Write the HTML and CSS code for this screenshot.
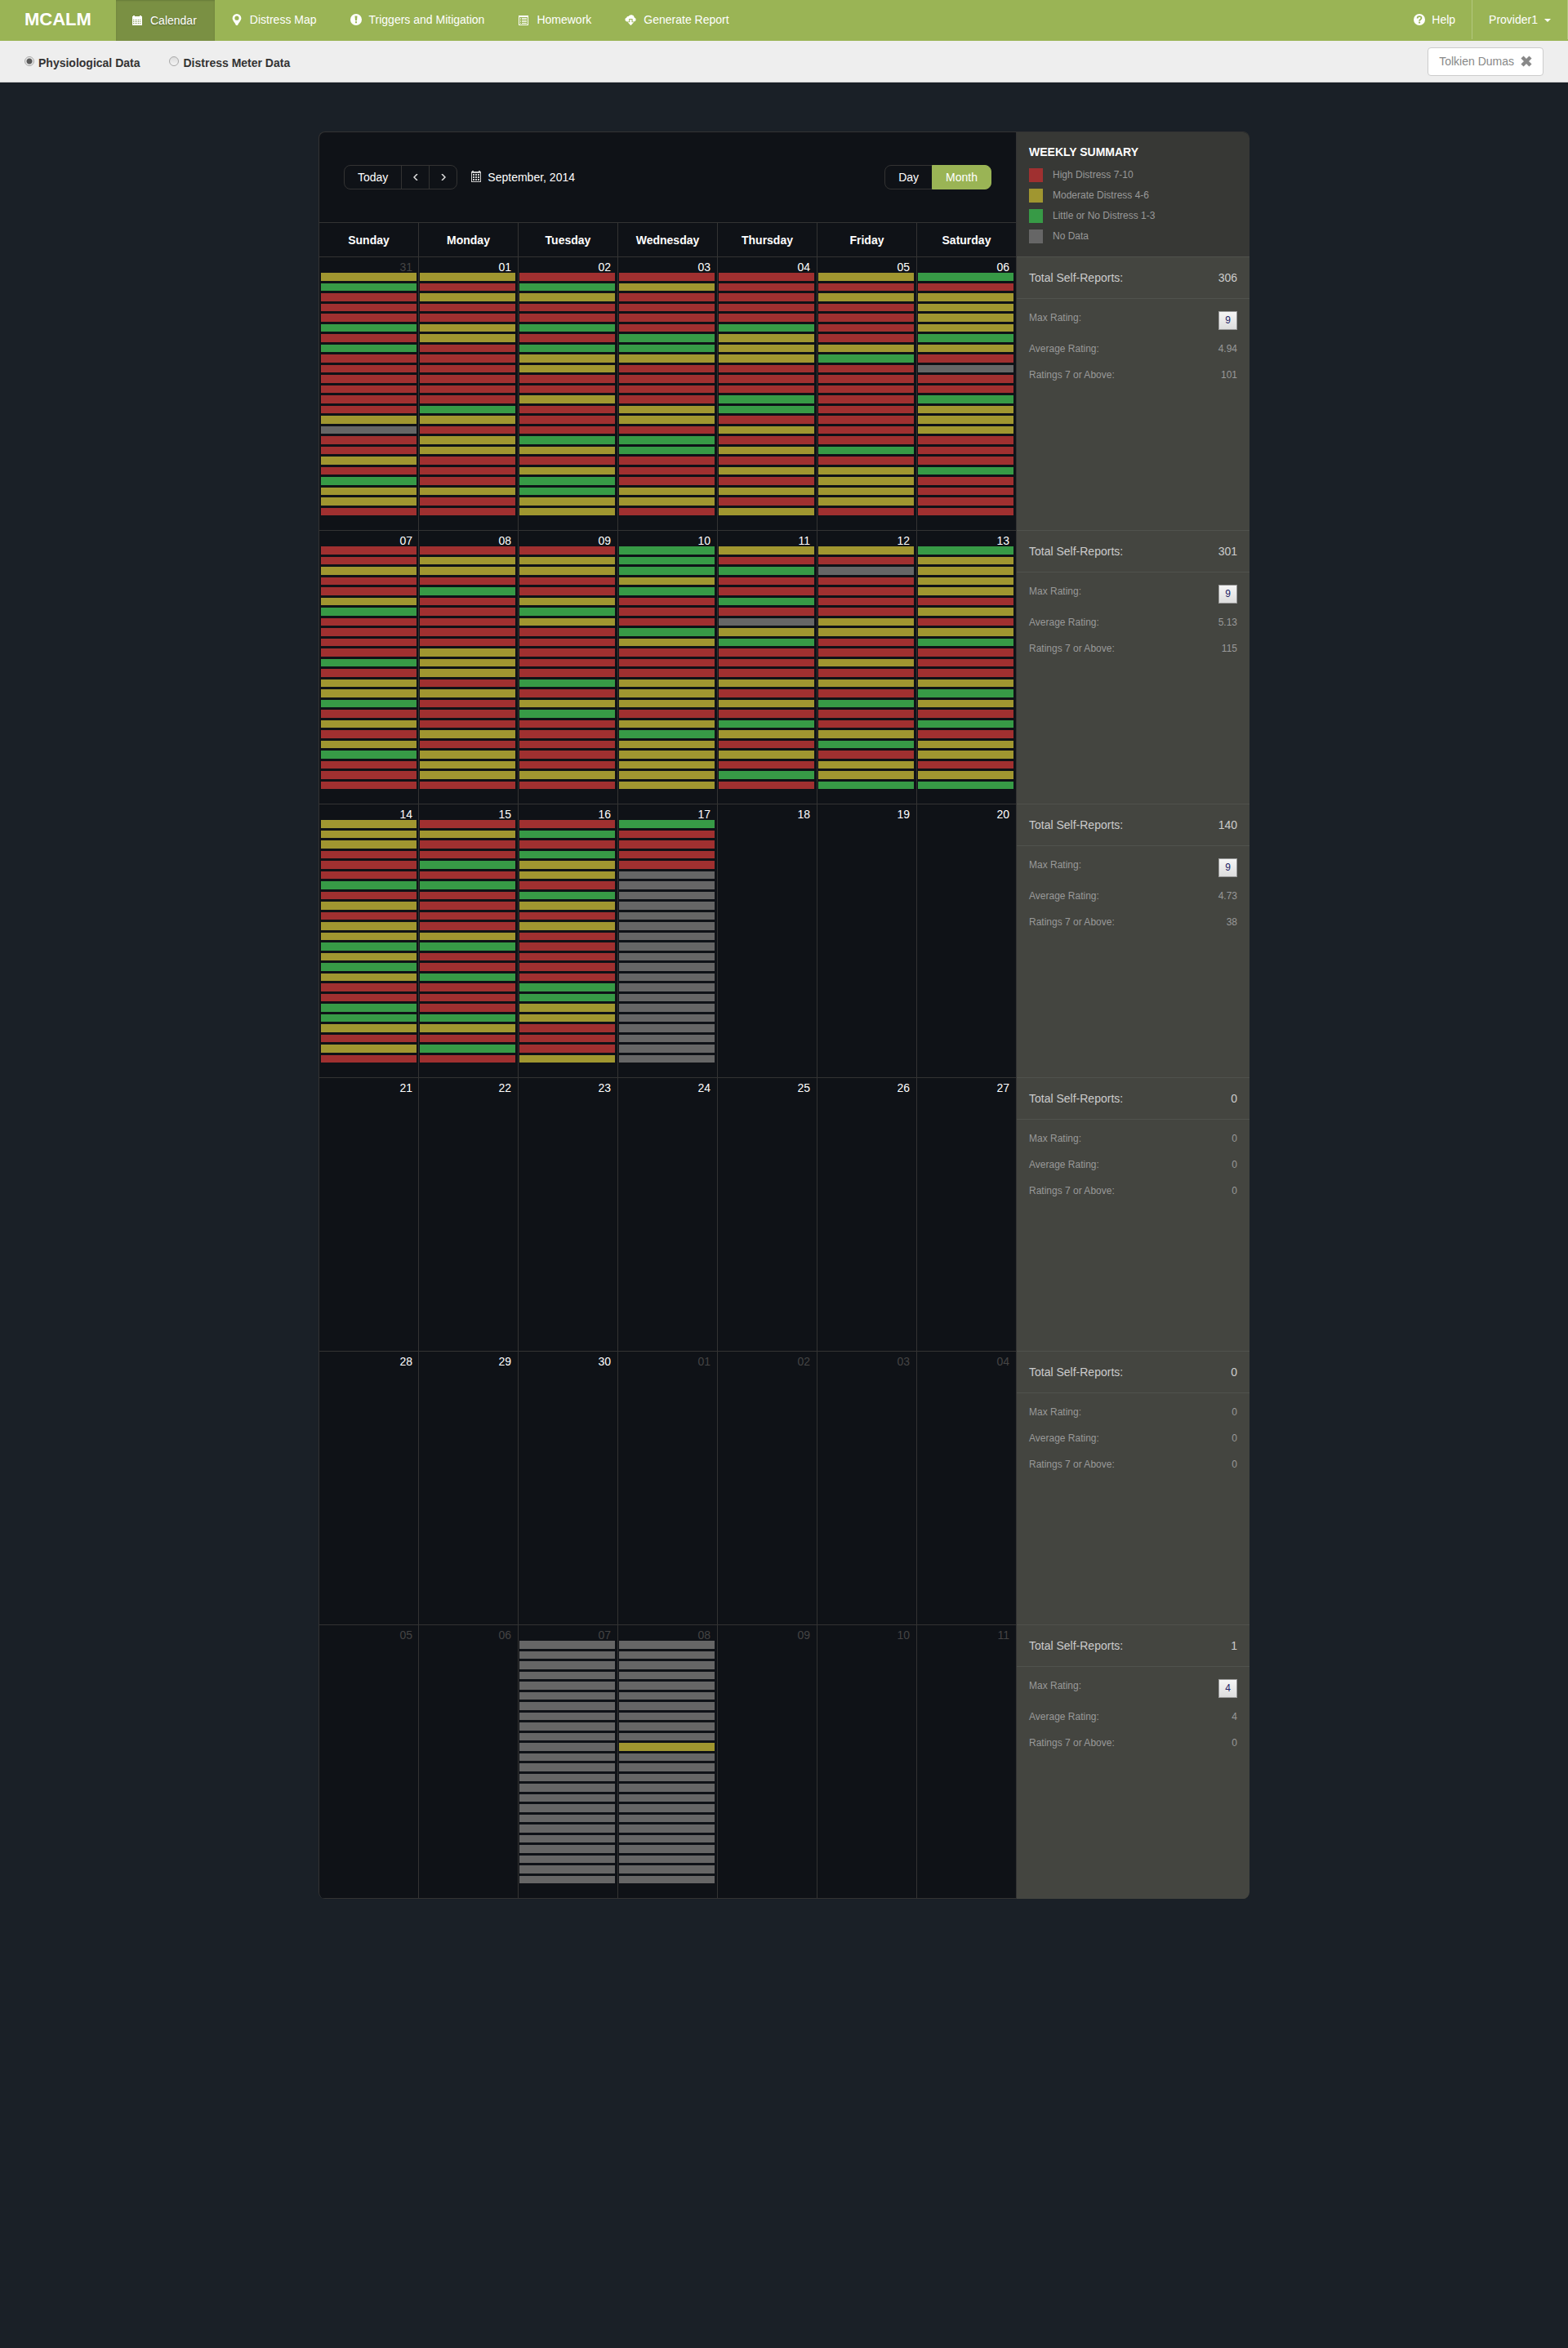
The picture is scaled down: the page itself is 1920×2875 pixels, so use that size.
FILE: index.html
```html
<!DOCTYPE html>
<html lang="en">
<head>
<meta charset="utf-8">
<meta name="viewport" content="width=device-width, initial-scale=1">
<title>MCALM - Calendar</title>
<link rel="stylesheet" href="styles.css">
<script src="calendar.js" defer></script>
</head>
<body>
<header class="navbar">
  <a class="brand" href="#">MCALM</a>
  <nav class="nav">
    <a class="nav-link active" href="#">
      <svg class="icon" viewBox="0 0 14 14" aria-hidden="true"><path fill="currentColor" fill-rule="evenodd" d="M0 2h1V1h2v1h6V1h2v1h1v3H0zM0 5h12v8H0zM1 6v1h1V6zm2 0v1h1V6zm2 0v1h1V6zm2 0v1h1V6zm2 0v1h1V6zM1 8v1h1V8zm2 0v1h1V8zm2 0v1h1V8zm2 0v1h1V8zm2 0v1h1V8zM1 10v1h1v-1zm2 0v1h1v-1zm2 0v1h1v-1zm2 0v1h1v-1zm2 0v1h1v-1z"/></svg>
      <span>Calendar</span></a>
    <a class="nav-link" href="#">
      <svg class="icon" viewBox="0 0 14 14" aria-hidden="true"><path fill="currentColor" fill-rule="evenodd" d="M7 0a5.4 5.4 0 0 1 5.4 5.2C12.400 8.200 9 11 8 14H6C5 11 1.600 8.200 1.600 5.200A5.400 5.400 0 0 1 7 0zm0 2.600a2.600 2.600 0 1 0 0 5.200 2.600 2.600 0 0 0 0-5.200z"/></svg>
      <span>Distress Map</span></a>
    <a class="nav-link" href="#">
      <svg class="icon" viewBox="0 0 14 14" aria-hidden="true"><path fill="currentColor" fill-rule="evenodd" d="M7 0a7 7 0 1 1 0 14A7 7 0 0 1 7 0zM5.500 2.500 6 8.200h2l.5-5.700zM6 9.300v2h2v-2z"/></svg>
      <span>Triggers and Mitigation</span></a>
    <a class="nav-link" href="#">
      <svg class="icon" viewBox="0 0 14 14" aria-hidden="true"><path fill="currentColor" fill-rule="evenodd" d="M1 2h12v12H1zm1 2v9h10V4z"/><path fill="currentColor" d="M3 5h1v1H3zm2 0h6v1H5zM3 7h1v1H3zm2 0h6v1H5zM3 9h1v1H3zm2 0h6v1H5zm-2 2h1v1H3zm2 0h6v1H5z"/></svg>
      <span>Homework</span></a>
    <a class="nav-link" href="#">
      <svg class="icon" viewBox="0 0 14 14" aria-hidden="true"><path fill="currentColor" d="M2.700 9.500a2.600 2.600 0 0 1-.4-5.100A2 2 0 0 1 4.500 3a4 4 0 0 1 7.300 1.600A2.500 2.500 0 0 1 11.500 9.500H9.600V6H5.200v3.500z"/><path fill="currentColor" d="M6.300 7h2.200v3.300h2.600L7.400 14.200 3.700 10.300h2.600z"/></svg>
      <span>Generate Report</span></a>
  </nav>
  <div class="nav-user">
    <a class="help" href="#">
      <svg class="icon" viewBox="0 0 14 14" aria-hidden="true"><circle cx="7" cy="7" r="7" fill="currentColor"/><path d="M4.600 5.400C4.600 2.400 9.500 2.400 9.500 5.100 9.500 6.800 7.100 6.800 7.100 8.700" fill="none" stroke="#9ab455" stroke-width="1.800"/><path fill="#9ab455" d="M6.100 9.600h2v1.900h-2z"/></svg>
      <span>Help</span></a>
    <button class="account" type="button">Provider1<span class="caret"></span></button>
  </div>
</header>

<form class="subbar">
  <label class="choice"><input class="radio" type="radio" name="source" checked>Physiological Data</label>
  <label class="choice"><input class="radio" type="radio" name="source">Distress Meter Data</label>
  <button class="patient" type="button">Tolkien Dumas
    <svg class="icon" viewBox="0 0 14 14" aria-hidden="true"><path d="M2 2l10 10M12 2 2 12" stroke="currentColor" stroke-width="4.400"/></svg>
  </button>
</form>

<main class="panel">
<table class="calendar">
  <colgroup><col span="7"><col class="summary-col"></colgroup>
  <thead>
    <tr>
      <td class="toolbar-cell" colspan="7">
        <div class="toolbar">
          <div class="group">
            <button class="btn" type="button">Today</button>
            <button class="btn arrow" type="button" aria-label="Previous"><svg width="6" height="8" viewBox="0 0 6 8"><path d="M5 0 1 4l4 4" fill="none" stroke="currentColor" stroke-width="1.500"/></svg></button>
            <button class="btn arrow" type="button" aria-label="Next"><svg width="6" height="8" viewBox="0 0 6 8"><path d="M1 0l4 4-4 4" fill="none" stroke="currentColor" stroke-width="1.500"/></svg></button>
          </div>
          <div class="period">
            <svg class="period-icon" viewBox="0 0 12 14" aria-hidden="true"><path fill="currentColor" fill-rule="evenodd" d="M0 1h1V0h2v1h6V0h2v1h1v13H0zm1 2v10h10V3z"/><path fill="currentColor" d="M2 4h2v2H2zm3 0h2v2H5zm3 0h2v2H8zM2 7h2v2H2zm3 0h2v2H5zm3 0h2v2H8zm-6 3h2v2H2zm3 0h2v2H5zm3 0h2v2H8z"/></svg>
            <span>September, 2014</span>
          </div>
          <div class="group views">
            <button class="btn" type="button">Day</button>
            <button class="btn selected" type="button">Month</button>
          </div>
        </div>
      </td>
      <td class="legend-cell" rowspan="2">
        <h2 class="legend-title">WEEKLY SUMMARY</h2>
        <ul class="legend">
          <li><span class="swatch r"></span>High Distress 7-10</li>
          <li><span class="swatch y"></span>Moderate Distress 4-6</li>
          <li><span class="swatch g"></span>Little or No Distress 1-3</li>
          <li><span class="swatch n"></span>No Data</li>
        </ul>
      </td>
    </tr>
    <tr class="weekdays"><th>Sunday</th><th>Monday</th><th>Tuesday</th><th>Wednesday</th><th>Thursday</th><th>Friday</th><th>Saturday</th></tr>
  </thead>
  <tbody>
    <tr class="week">
      <td class="day other" data-levels="ygrrrgrgrrrrrrynrryrgyyr">31</td>
      <td class="day" data-levels="yryrryyrrrrrrgyryyrrryrr">01</td>
      <td class="day" data-levels="rgyrrgrgyyrryrrrgyryggyy">02</td>
      <td class="day" data-levels="ryrrrrggyrrrryyrggrrryyr">03</td>
      <td class="day" data-levels="rrrrrgyyyrrrggryryryryry">04</td>
      <td class="day" data-levels="yryrrrrygrrrrrrrrgryyyyr">05</td>
      <td class="day" data-levels="gryyyygyrnrrgyyyrrrgrrrr">06</td>
      <td class="summary"><p class="total"><span>Total Self-Reports:</span><span>306</span></p>
        <dl class="stats"><div><dt>Max Rating:</dt><dd class="badge">9</dd></div><div><dt>Average Rating:</dt><dd>4.94</dd></div><div><dt>Ratings 7 or Above:</dt><dd>101</dd></div></dl></td>
    </tr>
    <tr class="week">
      <td class="day" data-levels="rryrrygrrrrgryygryrygrrr">07</td>
      <td class="day" data-levels="ryyrgrrrrryyyryrrryryyyr">08</td>
      <td class="day" data-levels="ryyrrygyrrrrrgrygrrrrryr">09</td>
      <td class="day" data-levels="gggygrrrgyrrryyyrygyyyyy">10</td>
      <td class="day" data-levels="yrgrrgrnygrrryryrgyryrgr">11</td>
      <td class="day" data-levels="yrnrrrryyrryryrgrrygryyg">12</td>
      <td class="day" data-levels="gyyyyryrygrrrygyrgryyryg">13</td>
      <td class="summary"><p class="total"><span>Total Self-Reports:</span><span>301</span></p>
        <dl class="stats"><div><dt>Max Rating:</dt><dd class="badge">9</dd></div><div><dt>Average Rating:</dt><dd>5.13</dd></div><div><dt>Ratings 7 or Above:</dt><dd>115</dd></div></dl></td>
    </tr>
    <tr class="week">
      <td class="day" data-levels="yyyrrrgryryygygyrrggyryr">14</td>
      <td class="day" data-levels="ryrrgrgrrrrygrrgrrrgyrgr">15</td>
      <td class="day" data-levels="rgrgyyrgyryrrrrrggyyrrry">16</td>
      <td class="day" data-levels="grrrrnnnnnnnnnnnnnnnnnnn">17</td>
      <td class="day">18</td>
      <td class="day">19</td>
      <td class="day">20</td>
      <td class="summary"><p class="total"><span>Total Self-Reports:</span><span>140</span></p>
        <dl class="stats"><div><dt>Max Rating:</dt><dd class="badge">9</dd></div><div><dt>Average Rating:</dt><dd>4.73</dd></div><div><dt>Ratings 7 or Above:</dt><dd>38</dd></div></dl></td>
    </tr>
    <tr class="week">
      <td class="day">21</td><td class="day">22</td><td class="day">23</td><td class="day">24</td><td class="day">25</td><td class="day">26</td><td class="day">27</td>
      <td class="summary"><p class="total"><span>Total Self-Reports:</span><span>0</span></p>
        <dl class="stats"><div><dt>Max Rating:</dt><dd>0</dd></div><div><dt>Average Rating:</dt><dd>0</dd></div><div><dt>Ratings 7 or Above:</dt><dd>0</dd></div></dl></td>
    </tr>
    <tr class="week">
      <td class="day">28</td><td class="day">29</td><td class="day">30</td><td class="day other">01</td><td class="day other">02</td><td class="day other">03</td><td class="day other">04</td>
      <td class="summary"><p class="total"><span>Total Self-Reports:</span><span>0</span></p>
        <dl class="stats"><div><dt>Max Rating:</dt><dd>0</dd></div><div><dt>Average Rating:</dt><dd>0</dd></div><div><dt>Ratings 7 or Above:</dt><dd>0</dd></div></dl></td>
    </tr>
    <tr class="week">
      <td class="day other">05</td><td class="day other">06</td>
      <td class="day other" data-levels="nnnnnnnnnnnnnnnnnnnnnnnn">07</td>
      <td class="day other" data-levels="nnnnnnnnnnynnnnnnnnnnnnn">08</td>
      <td class="day other">09</td><td class="day other">10</td><td class="day other">11</td>
      <td class="summary"><p class="total"><span>Total Self-Reports:</span><span>1</span></p>
        <dl class="stats"><div><dt>Max Rating:</dt><dd class="badge">4</dd></div><div><dt>Average Rating:</dt><dd>4</dd></div><div><dt>Ratings 7 or Above:</dt><dd>0</dd></div></dl></td>
    </tr>
  </tbody>
</table>
</main>
</body>
</html>
```
FILE: styles.css
```css
* { box-sizing: border-box; }

body {
  margin: 0;
  background: #1a2027;
  color: #fff;
  font-family: "Liberation Sans", Arial, sans-serif;
  font-size: 14px;
  line-height: 20px;
}

a { color: inherit; text-decoration: none; }
button { font: inherit; color: inherit; margin: 0; cursor: pointer; }
.icon { width: 14px; height: 14px; flex: none; }

/* Top navigation */
.navbar { display: flex; height: 50px; background: #9ab455; }
.brand { width: 142px; padding-left: 30px; font-size: 22px; font-weight: bold; line-height: 48px; }
.nav { display: flex; }
.nav-link, .help, .account { display: flex; align-items: center; padding-bottom: 3px; }
.nav-link { gap: 9px; padding-left: 20px; padding-right: 21px; }
.nav-link.active { gap: 8px; padding-right: 22px; padding-bottom: 0; background: #7a9043; box-shadow: inset 0 1px 2px rgba(0, 0, 0, .15); text-shadow: 0 1px 2px rgba(0, 0, 0, .3); }
.nav-user { display: flex; height: 48px; margin-left: auto; border-right: 1px solid #b3c77f; }
.help { gap: 8px; padding-right: 20px; padding-bottom: 0; }
.account { gap: 8px; padding: 0 20px; border: 0; border-left: 1px solid #b3c77f; background: none; }
.caret { border: 4px solid transparent; border-top-color: #fff; border-bottom: 0; margin-top: 2px; }

/* Data source bar */
.subbar { display: flex; align-items: center; gap: 36px; height: 51px; padding: 0 30px; border-bottom: 1px solid #d5d5d5; background: #eee; color: #333; }
.choice { display: flex; align-items: center; gap: 5px; padding-top: 3px; font-weight: bold; }
.radio { appearance: none; width: 12px; height: 12px; margin: 0 0 3px; border: 1px solid #a8a8a8; border-radius: 50%; background: linear-gradient(#dcdcdc, #f4f4f4); }
.radio:checked { background: radial-gradient(circle, #5a5a5a 0 3px, #e8e8e8 4px); }
.patient { display: flex; align-items: center; gap: 8px; height: 35px; margin-left: auto; padding: 0 13px; border: 1px solid #ccc; border-radius: 4px; background: #fff; color: #888; }

/* Calendar panel */
.panel { width: 1140px; max-width: 100%; margin: 60px auto; border: 1px solid #333; border-width: 1px 0 0 1px; border-radius: 8px; background: #0f1217; overflow: hidden; }
.calendar { width: 100%; table-layout: fixed; border-spacing: 0; }
.summary-col { width: 285px; }
.calendar td, .calendar th { padding: 0; border: solid #333; border-width: 0 1px 1px 0; vertical-align: top; }

.toolbar { display: flex; align-items: center; padding: 40px 30px; }
.group { display: flex; }
.btn { height: 30px; padding: 0 16px; border: 1px solid #333; background: none; }
.btn + .btn { margin-left: -1px; }
.btn:first-child { border-radius: 8px 0 0 8px; }
.btn:last-child { border-radius: 0 8px 8px 0; }
.btn.arrow { display: flex; align-items: center; justify-content: center; width: 35px; padding: 0; color: #ddd; }
.selected { border-color: #9ab455; background: #9ab455; }
.views { margin-left: auto; }
.period { display: flex; align-items: center; gap: 8px; margin-left: 17px; }
.period-icon { width: 12px; height: 14px; margin-bottom: 2px; color: #ccc; }

.calendar .weekdays th { height: 42px; vertical-align: middle; }

.calendar .legend-cell { padding: 14px 15px 0; border-right: 0; border-bottom-color: #50524d; background: #373835; }
.legend-title { margin: 0 0 10px; font-size: 14px; line-height: 20px; }
.legend { display: grid; gap: 8px; margin: 0; padding: 0; list-style: none; color: #999; font-size: 12px; line-height: 17px; }
.legend li { display: flex; gap: 12px; }
.swatch { width: 17px; height: 17px; }

/* Day cells */
.week { height: 335px; }
.calendar .day { padding: 5px 3px 0 1px; line-height: 14px; }
.calendar .day:first-child { padding-left: 2px; padding-right: 2px; }
.date { display: block; padding-right: 5px; text-align: right; }
.other { color: #444; }
.bar { height: 10px; margin-bottom: 3px; }
.bar:nth-of-type(even) { height: 9px; }
.r { background: #a03030; }
.y { background: #a09630; }
.g { background: #379a46; }
.n { background: #666; }

/* Weekly summary */
.calendar .summary { border-right: 0; border-bottom-color: #50524d; background: #444540; }
.calendar .week:last-child .summary { border-bottom-color: #444540; }
.total { display: flex; justify-content: space-between; margin: 0; padding: 15px; border-bottom: 1px solid #50524d; color: #ccc; }
.stats { display: grid; gap: 12px; margin: 0; padding: 13px 15px; color: #999; font-size: 12px; }
.stats div { display: flex; justify-content: space-between; align-items: flex-start; }
.stats dd { margin: 0; }
.stats .badge { width: 23px; height: 23px; margin: 2px 0 1px; border: 1px solid #999; background: linear-gradient(#f5f5f5, #ddd); color: #226; line-height: 21px; text-align: center; }
```
FILE: calendar.js
```js
// Each letter of data-levels is one hour: r = high, y = moderate, g = low, n = no data.
document.querySelectorAll('.day').forEach(function (cell) {
  var date = document.createElement('span');
  date.className = 'date';
  date.textContent = cell.textContent;
  cell.textContent = '';
  cell.appendChild(date);
  Array.from(cell.dataset.levels || '').forEach(function (level) {
    var bar = document.createElement('div');
    bar.className = 'bar ' + level;
    cell.appendChild(bar);
  });
});
```
